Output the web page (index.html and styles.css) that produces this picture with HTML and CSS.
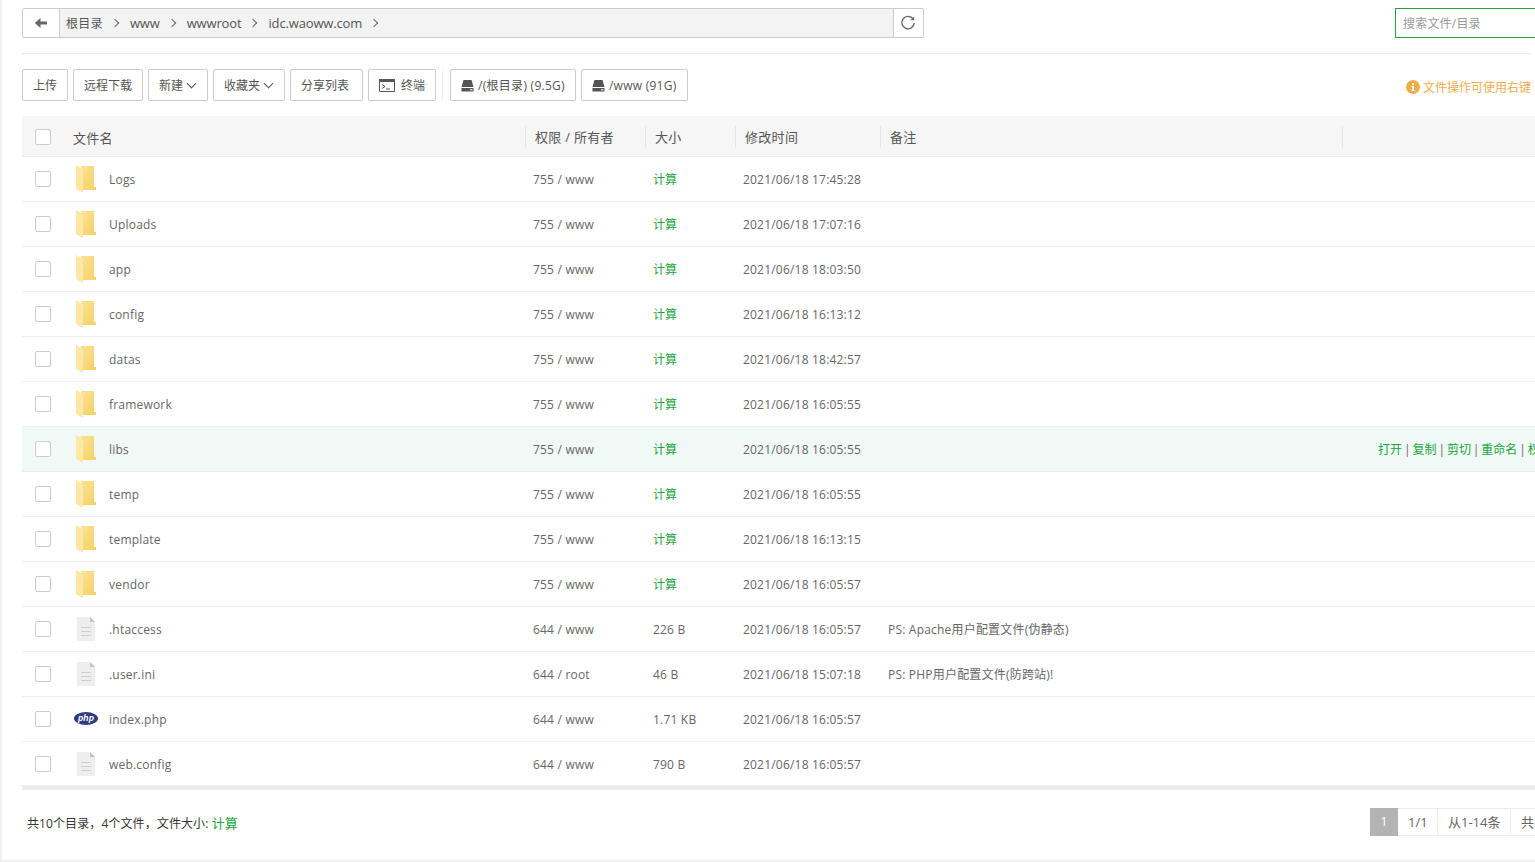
FILE: index.html

```html
<!DOCTYPE html>
<html lang="en">
<head>
    <meta charset="UTF-8">
    <meta name="viewport" content="width=device-width, initial-scale=1.0">
    <title>文件管理</title>
    <link rel="stylesheet" href="styles.css">
</head>
<body>
    <svg class="defs" width="0" height="0">
        <defs>
            <linearGradient id="folder-back" x1="0" y1="0" x2="1" y2="1">
                <stop offset="0" stop-color="#fbe296"/>
                <stop offset="1" stop-color="#f6d064"/>
            </linearGradient>
        </defs>
        <symbol id="folder" viewBox="0 0 20 28">
            <path d="M5 1H18V22H20V25H6Z" fill="url(#folder-back)"/>
            <path d="M0 0L7 4V28L0 24Z" fill="#ffe8a3"/>
        </symbol>
        <symbol id="file" viewBox="0 0 18 24">
            <path d="M0 0H13L18 5V24H0Z" fill="#eeeeee"/>
            <path d="M13 0L18 5H13Z" fill="#c4c4c4"/>
            <path d="M4 10H14V11H4ZM4 14H14V15H4ZM4 18H14V19H4Z" fill="#cfcfcf"/>
        </symbol>
        <symbol id="php" viewBox="0 0 24 13">
            <ellipse cx="12" cy="6.5" rx="12" ry="6.5" fill="#2f3a80"/>
            <text x="12" y="9.2" text-anchor="middle" font-family="Liberation Sans, sans-serif" font-size="8.5" font-weight="700" font-style="italic" fill="#fff">php</text>
        </symbol>
        <symbol id="drive" viewBox="0 0 13 13">
            <path d="M2.5 1H10.5L12.5 8H.5Z" fill="#555"/>
            <path d="M.5 9H12.5V12.5H.5Z" fill="#555"/>
            <path d="M9 10.3H11.5V11.3H9Z" fill="#fff"/>
        </symbol>
    </svg>

    <div class="page">
        <div class="topbar">
            <div class="pathbar">
                <button class="back" type="button" aria-label="back">
                    <svg width="14" height="12" viewBox="0 0 14 12"><path d="M6.5 1V4.4H13V7.6H6.5V11L.8 6Z" fill="#666"/></svg>
                </button>
                <div class="crumbs">
                    <span class="crumb-root">根目录</span><i class="sep"></i>
                    <span>www</span><i class="sep"></i>
                    <span>wwwroot</span><i class="sep"></i>
                    <span>idc.waoww.com</span><i class="sep"></i>
                </div>
                <button class="refresh" type="button" aria-label="refresh">
                    <svg width="16" height="16" viewBox="0 0 16 16"><path d="M13.2 4.2A6.2 6.2 0 1 0 14.2 8" fill="none" stroke="#666" stroke-width="1.4"/><path d="M10.4 5.2H14.2V1.4Z" fill="#666"/></svg>
                </button>
            </div>
            <input class="search" type="text" placeholder="搜索文件/目录">
        </div>

        <div class="toolbar">
            <button class="btn" type="button">上传</button>
            <button class="btn" type="button">远程下载</button>
            <button class="btn" type="button">新建<i class="caret"></i></button>
            <button class="btn" type="button">收藏夹<i class="caret"></i></button>
            <button class="btn btn-share" type="button">分享列表</button>
            <button class="btn btn-term" type="button">
                <svg width="16" height="13" viewBox="0 0 16 13"><path d="M.5.5H15.5V12.5H.5Z" fill="#fff" stroke="#555"/><path d="M0 0H16V3H0Z" fill="#555"/><path d="M3 5.5L6 7.5L3 9.5M7 10H11" fill="none" stroke="#555"/></svg>
                终端
            </button>
            <i class="divider"></i>
            <button class="btn btn-drive" type="button"><svg class="drive" width="13" height="13"><use href="#drive"/></svg>/(根目录) (9.5G)</button>
            <button class="btn btn-drive" type="button"><svg class="drive" width="13" height="13"><use href="#drive"/></svg>/www (91G)</button>
            <div class="tip">
                <svg width="14" height="14" viewBox="0 0 14 14"><circle cx="7" cy="7" r="7" fill="#f0ad4e"/><path d="M6 3H8V5H6ZM5.5 6H8V10H9V11H5.5V10H6.3V7H5.5Z" fill="#fff"/></svg>
                文件操作可使用右键
            </div>
        </div>

        <table class="files">
            <colgroup>
                <col class="c-name"><col class="c-perm"><col class="c-size"><col class="c-time"><col class="c-note"><col class="c-act">
            </colgroup>
            <thead>
                <tr>
                    <th><div class="head-name"><label class="check"></label>文件名</div></th>
                    <th><span>权限 / 所有者</span></th>
                    <th><span>大小</span></th>
                    <th><span>修改时间</span></th>
                    <th><span>备注</span></th>
                    <th><span></span></th>
                </tr>
            </thead>
            <tbody>
                <tr>
                    <td><div class="namecell"><label class="check"></label><svg class="ico"><use href="#folder"/></svg>Logs</div></td>
                    <td>755 / www</td><td class="calc">计算</td><td>2021/06/18 17:45:28</td><td></td><td></td>
                </tr>
                <tr>
                    <td><div class="namecell"><label class="check"></label><svg class="ico"><use href="#folder"/></svg>Uploads</div></td>
                    <td>755 / www</td><td class="calc">计算</td><td>2021/06/18 17:07:16</td><td></td><td></td>
                </tr>
                <tr>
                    <td><div class="namecell"><label class="check"></label><svg class="ico"><use href="#folder"/></svg>app</div></td>
                    <td>755 / www</td><td class="calc">计算</td><td>2021/06/18 18:03:50</td><td></td><td></td>
                </tr>
                <tr>
                    <td><div class="namecell"><label class="check"></label><svg class="ico"><use href="#folder"/></svg>config</div></td>
                    <td>755 / www</td><td class="calc">计算</td><td>2021/06/18 16:13:12</td><td></td><td></td>
                </tr>
                <tr>
                    <td><div class="namecell"><label class="check"></label><svg class="ico"><use href="#folder"/></svg>datas</div></td>
                    <td>755 / www</td><td class="calc">计算</td><td>2021/06/18 18:42:57</td><td></td><td></td>
                </tr>
                <tr>
                    <td><div class="namecell"><label class="check"></label><svg class="ico"><use href="#folder"/></svg>framework</div></td>
                    <td>755 / www</td><td class="calc">计算</td><td>2021/06/18 16:05:55</td><td></td><td></td>
                </tr>
                <tr class="hover">
                    <td><div class="namecell"><label class="check"></label><svg class="ico"><use href="#folder"/></svg>libs</div></td>
                    <td>755 / www</td><td class="calc">计算</td><td>2021/06/18 16:05:55</td><td></td>
                    <td class="actions"><a>打开</a> | <a>复制</a> | <a>剪切</a> | <a>重命名</a> | <a>权限</a> | <a>压缩</a> | <a>删除</a></td>
                </tr>
                <tr>
                    <td><div class="namecell"><label class="check"></label><svg class="ico"><use href="#folder"/></svg>temp</div></td>
                    <td>755 / www</td><td class="calc">计算</td><td>2021/06/18 16:05:55</td><td></td><td></td>
                </tr>
                <tr>
                    <td><div class="namecell"><label class="check"></label><svg class="ico"><use href="#folder"/></svg>template</div></td>
                    <td>755 / www</td><td class="calc">计算</td><td>2021/06/18 16:13:15</td><td></td><td></td>
                </tr>
                <tr>
                    <td><div class="namecell"><label class="check"></label><svg class="ico"><use href="#folder"/></svg>vendor</div></td>
                    <td>755 / www</td><td class="calc">计算</td><td>2021/06/18 16:05:57</td><td></td><td></td>
                </tr>
                <tr>
                    <td><div class="namecell"><label class="check"></label><svg class="ico ico-file"><use href="#file"/></svg>.htaccess</div></td>
                    <td>644 / www</td><td>226 B</td><td>2021/06/18 16:05:57</td><td class="note">PS: Apache用户配置文件(伪静态)</td><td></td>
                </tr>
                <tr>
                    <td><div class="namecell"><label class="check"></label><svg class="ico ico-file"><use href="#file"/></svg>.user.ini</div></td>
                    <td>644 / root</td><td>46 B</td><td>2021/06/18 15:07:18</td><td class="note">PS: PHP用户配置文件(防跨站)!</td><td></td>
                </tr>
                <tr>
                    <td><div class="namecell"><label class="check"></label><svg class="ico ico-php"><use href="#php"/></svg>index.php</div></td>
                    <td>644 / www</td><td>1.71 KB</td><td>2021/06/18 16:05:57</td><td></td><td></td>
                </tr>
                <tr>
                    <td><div class="namecell"><label class="check"></label><svg class="ico ico-file"><use href="#file"/></svg>web.config</div></td>
                    <td>644 / www</td><td>790 B</td><td>2021/06/18 16:05:57</td><td></td><td></td>
                </tr>
            </tbody>
        </table>
        <div class="band"></div>

        <div class="footer">
            <div class="summary">共10个目录，4个文件，文件大小: <a>计算</a></div>
            <div class="pager">
                <span class="current">1</span><span class="p-pages">1/1</span><span class="p-range">从1-14条</span><span class="p-total">共14条</span>
            </div>
        </div>
    </div>
</body>
</html>
```

FILE: styles.css

```css
* {
    box-sizing: border-box;
}
html, body {
    margin: 0;
    height: 100%;
    overflow: hidden;
}
body {
    background-color: #f0f0f0;
    color: #666;
    font-family: "Open Sans", "Noto Sans CJK SC", sans-serif;
    font-size: 12px;
}
.defs {
    position: absolute;
}
button {
    font-family: inherit;
    font-size: 12px;
    color: #555;
    cursor: pointer;
}
.page {
    width: 1533px;
    height: 860px;
    margin-left: 2px;
    padding: 8px 0 0 20px;
    background-color: #fff;
    overflow: hidden;
}

/* path bar */
.topbar {
    display: flex;
    justify-content: space-between;
    height: 30px;
    width: 1600px;
}
.pathbar {
    display: flex;
    width: 902px;
    border: 1px solid #ccc;
    border-radius: 2px;
    background-color: #f3f3f3;
}
.back {
    width: 37px;
    border: 0;
    border-right: 1px solid #ccc;
    background-color: #fff;
    padding: 0;
    display: flex;
    align-items: center;
    justify-content: center;
}
.refresh {
    width: 30px;
    margin-left: auto;
    border: 0;
    border-left: 1px solid #ccc;
    background-color: #fff;
    padding: 0 1px 0 0;
    display: flex;
    align-items: center;
    justify-content: center;
}
.crumbs {
    display: flex;
    align-items: center;
    padding-left: 6px;
    color: #555;
    font-size: 13px;
    letter-spacing: -0.15px;
}
.crumb-root {
    font-size: 12px;
    letter-spacing: 0.3px;
}
.sep {
    width: 6px;
    height: 6px;
    margin: 0 12px 0 9px;
    border-top: 1px solid #666;
    border-right: 1px solid #666;
    transform: rotate(45deg);
}
.search {
    width: 227px;
    padding: 0 7px;
    border: 1px solid #20a53a;
    outline: 0;
    font-family: inherit;
    font-size: 12px;
    letter-spacing: 0.2px;
}
.search::placeholder {
    color: #999;
}

/* buttons */
.toolbar {
    display: flex;
    align-items: center;
    gap: 5px;
    width: 1509px;
    box-sizing: content-box;
    height: 32px;
    margin: 15px 0;
    padding-top: 15px;
    border-top: 1px solid #ececec;
}
.btn {
    display: flex;
    align-items: center;
    height: 32px;
    padding: 0 10px;
    border: 1px solid #ccc;
    border-radius: 2px;
    background-color: #fff;
    white-space: nowrap;
}
.caret {
    width: 7px;
    height: 7px;
    margin: -3px 2px 0 5px;
    border-right: 1px solid #555;
    border-bottom: 1px solid #555;
    transform: rotate(45deg);
}
.btn-share {
    padding-right: 13px;
}
.btn-term svg {
    margin-right: 6px;
}
.btn-drive {
    letter-spacing: 0.27px;
}
.drive {
    margin-right: 4px;
}
.divider {
    width: 1px;
    height: 32px;
    margin: 0 2px 0 1px;
    background-color: #f0f0f0;
}
.tip {
    display: flex;
    align-items: center;
    gap: 3px;
    margin-left: auto;
    margin-top: 4px;
    color: #f0ad4e;
}

/* file list */
.files {
    width: 1620px;
    table-layout: fixed;
    border-collapse: collapse;
}
.c-name { width: 503px; }
.c-perm { width: 120px; }
.c-size { width: 90px; }
.c-time { width: 145px; }
.c-note { width: 462px; }
.files th {
    height: 40px;
    padding: 0;
    background-color: #f6f6f6;
    border-bottom: 1px solid #ececec;
    font-size: 13px;
    font-weight: 400;
    letter-spacing: 0.3px;
    text-align: left;
    color: #555;
}
.files th span {
    display: block;
    height: 22px;
    line-height: 22px;
    margin-top: 3px;
    padding-left: 9px;
    border-left: 1px solid #e6e6e6;
}
.files th:first-child {
    padding: 4px 0 0 13px;
}
.head-name {
    display: flex;
    align-items: center;
    gap: 22px;
}
.head-name .check {
    margin-bottom: 2px;
}
.files td {
    height: 45px;
    padding: 2px 0 0 8px;
    border-bottom: 1px solid #f0f0f0;
    letter-spacing: 0.2px;
    white-space: nowrap;
    overflow: hidden;
}
.files td:first-child {
    padding-left: 13px;
}
.namecell {
    display: flex;
    align-items: center;
}
.check {
    display: block;
    flex: none;
    width: 16px;
    height: 16px;
    margin-bottom: 2px;
    border: 1px solid #ccc;
    border-radius: 2px;
    background-color: #fff;
}
.ico {
    width: 20px;
    height: 28px;
    margin: 0 13px 2px 25px;
    flex: none;
}
.ico-file {
    width: 18px;
    height: 24px;
    margin: 0 14px 2px 26px;
}
.ico-php {
    width: 24px;
    height: 13px;
    margin: 0 11px 2px 23px;
}
.files td.calc {
    padding-top: 0;
    color: #20a53a;
    letter-spacing: 0;
}
.files td.note {
    padding-top: 0;
}
.hover td {
    background-color: #f1f9f7;
    border-bottom-color: #e6eeec;
}
.files td.actions {
    padding-top: 0;
    padding-left: 36px;
    letter-spacing: 0;
    word-spacing: -1.2px;
}
.actions a {
    color: #20a53a;
}
.band {
    width: 1513px;
    height: 5px;
    margin-top: -2px;
    background-color: #ececec;
}

/* footer */
.footer {
    display: flex;
    align-items: center;
    width: 1600px;
    height: 28px;
    margin-top: 18px;
    padding-left: 5px;
}
.summary {
    margin-top: 2px;
    color: #333;
    letter-spacing: 0.1px;
}
.summary a {
    color: #20a53a;
    font-size: 13px;
}
.pager {
    display: flex;
    flex: none;
    width: 252px;
    margin-left: auto;
    font-size: 13px;
}
.pager span {
    height: 28px;
    line-height: 26px;
    padding: 0 10px;
    border: 1px solid #ececec;
    border-left: 0;
    text-align: center;
    white-space: nowrap;
}
.pager .current {
    width: 28px;
    padding: 0;
    border: 0;
    background-color: #b3b3b3;
    color: #fff;
}
.pager .p-pages {
    width: 40px;
}
.pager .p-range {
    width: 73px;
}
```
